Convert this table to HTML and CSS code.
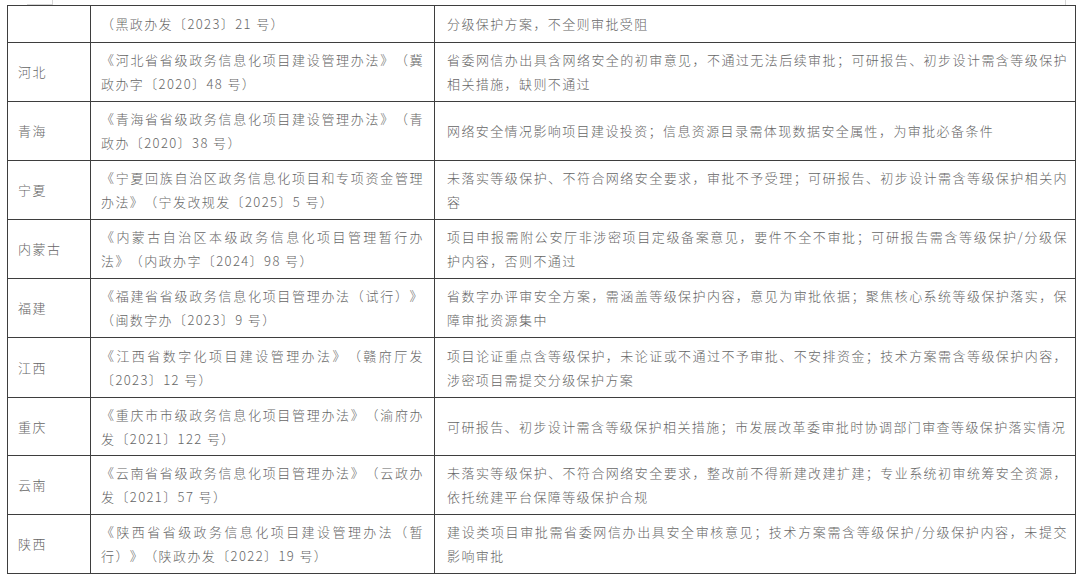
FILE: index.html
```html
<!DOCTYPE html>
<html lang="zh-CN">
<head>
<meta charset="utf-8">
<title>各省政务信息化项目管理办法</title>
<link rel="stylesheet" href="styles.css">
</head>
<body>
<div class="strip">
  <span class="frag frag-left"></span>
  <span class="frag frag-right"></span>
</div>
<table class="policy">
  <colgroup>
    <col class="c-prov">
    <col class="c-doc">
    <col class="c-req">
  </colgroup>
  <tbody>
    <tr class="r-first">
      <td class="prov"></td>
      <td class="doc">（黑政办发〔2023〕21 号）</td>
      <td class="req">分级保护方案，不全则审批受阻</td>
    </tr>
    <tr>
      <td class="prov">河北</td>
      <td class="doc">《河北省省级政务信息化项目建设管理办法》（冀政办字〔2020〕48 号）</td>
      <td class="req">省委网信办出具含网络安全的初审意见，不通过无法后续审批；可研报告、初步设计需含等级保护相关措施，缺则不通过</td>
    </tr>
    <tr>
      <td class="prov">青海</td>
      <td class="doc">《青海省省级政务信息化项目建设管理办法》（青政办〔2020〕38 号）</td>
      <td class="req">网络安全情况影响项目建设投资；信息资源目录需体现数据安全属性，为审批必备条件</td>
    </tr>
    <tr>
      <td class="prov">宁夏</td>
      <td class="doc">《宁夏回族自治区政务信息化项目和专项资金管理办法》（宁发改规发〔2025〕5 号）</td>
      <td class="req">未落实等级保护、不符合网络安全要求，审批不予受理；可研报告、初步设计需含等级保护相关内容</td>
    </tr>
    <tr>
      <td class="prov">内蒙古</td>
      <td class="doc">《内蒙古自治区本级政务信息化项目管理暂行办法》（内政办字〔2024〕98 号）</td>
      <td class="req">项目申报需附公安厅非涉密项目定级备案意见，要件不全不审批；可研报告需含等级保护/分级保护内容，否则不通过</td>
    </tr>
    <tr>
      <td class="prov">福建</td>
      <td class="doc">《福建省省级政务信息化项目管理办法（试行）》（闽数字办〔2023〕9 号）</td>
      <td class="req">省数字办评审安全方案，需涵盖等级保护内容，意见为审批依据；聚焦核心系统等级保护落实，保障审批资源集中</td>
    </tr>
    <tr class="r-tall">
      <td class="prov">江西</td>
      <td class="doc">《江西省数字化项目建设管理办法》（赣府厅发〔2023〕12 号）</td>
      <td class="req">项目论证重点含等级保护，未论证或不通过不予审批、不安排资金；技术方案需含等级保护内容，涉密项目需提交分级保护方案</td>
    </tr>
    <tr class="r-short">
      <td class="prov">重庆</td>
      <td class="doc">《重庆市市级政务信息化项目管理办法》（渝府办发〔2021〕122 号）</td>
      <td class="req">可研报告、初步设计需含等级保护相关措施；市发展改革委审批时协调部门审查等级保护落实情况</td>
    </tr>
    <tr>
      <td class="prov">云南</td>
      <td class="doc">《云南省省级政务信息化项目管理办法》（云政办发〔2021〕57 号）</td>
      <td class="req">未落实等级保护、不符合网络安全要求，整改前不得新建改建扩建；专业系统初审统筹安全资源，依托统建平台保障等级保护合规</td>
    </tr>
    <tr>
      <td class="prov">陕西</td>
      <td class="doc">《陕西省省级政务信息化项目建设管理办法（暂行）》（陕政办发〔2022〕19 号）</td>
      <td class="req">建设类项目审批需省委网信办出具安全审核意见；技术方案需含等级保护/分级保护内容，未提交影响审批</td>
    </tr>
  </tbody>
</table>
</body>
</html>
```

FILE: styles.css
```css
html, body {
  margin: 0;
  padding: 0;
  background: #ffffff;
}

body {
  width: 1080px;
  height: 577px;
  overflow: hidden;
  font-family: "Noto Sans CJK SC", "Noto Sans", sans-serif;
  font-weight: 300;
  color: #666666;
}

.strip {
  height: 5px;
  display: flex;
}

.frag {
  display: block;
  height: 4px;
}

.frag-left {
  margin-left: 27px;
  width: 25px;
  border-bottom: 1px solid #d6d6d6;
  border-right: 1px solid #d6d6d6;
}

.frag-right {
  margin-left: 1012px;
  width: 0;
  height: 5px;
  border-right: 1px solid #d6d6d6;
}

.policy {
  margin-left: 7px;
  width: 1068px;
  table-layout: fixed;
  border-collapse: collapse;
  font-size: 13px;
  line-height: 24px;
}

.c-prov { width: 83px; }
.c-doc { width: 344px; }
.c-req { width: 641px; }

.policy td {
  border: 1px solid #3e3e3e;
  vertical-align: middle;
  padding: 0;
  text-align: justify;
  text-spacing-trim: space-all;
  line-break: strict;
}

.policy tr { height: 59px; }
.policy tr.r-first { height: 37px; }
.policy tr.r-tall { height: 60px; }
.policy tr.r-short { height: 58px; }

.prov {
  padding-left: 10px !important;
  letter-spacing: 1.5px;
}

.doc {
  padding-left: 10px !important;
  padding-right: 10px !important;
  letter-spacing: 1.4px;
}

.req {
  padding-left: 12px !important;
  padding-right: 7px !important;
  letter-spacing: 1.4px;
}
```
